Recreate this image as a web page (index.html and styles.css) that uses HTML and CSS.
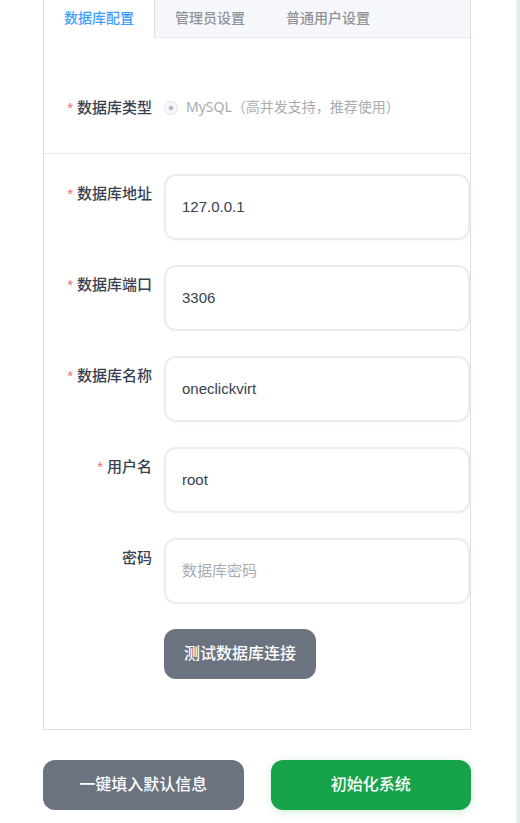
FILE: index.html
```html
<!DOCTYPE html>
<html lang="zh-CN">
<head>
<meta charset="utf-8">
<meta name="viewport" content="width=device-width, initial-scale=1">
<title>系统初始化</title>
<link rel="stylesheet" href="styles.css">
</head>
<body>
<main class="card">
  <form class="setup">
    <section class="panel">
      <div class="tabs" role="tablist">
        <button class="tab tab-active" type="button" role="tab" aria-selected="true">数据库配置</button>
        <button class="tab" type="button" role="tab" aria-selected="false">管理员设置</button>
        <button class="tab" type="button" role="tab" aria-selected="false">普通用户设置</button>
      </div>
      <div class="row type-row">
        <label class="label required" for="db-type">数据库类型</label>
        <div class="radio">
          <input id="db-type" class="radio-input" type="radio" name="db-type" checked disabled>
          <label class="radio-text" for="db-type">MySQL（高并发支持，推荐使用）</label>
        </div>
      </div>
      <div class="fields">
        <div class="row">
          <label class="label required" for="db-host">数据库地址</label>
          <input class="field" id="db-host" type="text" value="127.0.0.1">
        </div>
        <div class="row">
          <label class="label required" for="db-port">数据库端口</label>
          <input class="field" id="db-port" type="text" value="3306">
        </div>
        <div class="row">
          <label class="label required" for="db-name">数据库名称</label>
          <input class="field" id="db-name" type="text" value="oneclickvirt">
        </div>
        <div class="row">
          <label class="label required" for="db-user">用户名</label>
          <input class="field" id="db-user" type="text" value="root">
        </div>
        <div class="row">
          <label class="label" for="db-pass">密码</label>
          <input class="field" id="db-pass" type="password" placeholder="数据库密码">
        </div>
        <div class="row">
          <span class="label"></span>
          <button class="button" type="button">测试数据库连接</button>
        </div>
      </div>
    </section>
    <div class="actions">
      <button class="button" type="button">一键填入默认信息</button>
      <button class="button button-primary" type="submit">初始化系统</button>
    </div>
  </form>
</main>
</body>
</html>
```
FILE: styles.css
```css
* {
  box-sizing: border-box;
}

body {
  margin: 0;
  background: #def1e8;
  color: #374151;
  font-family: "Liberation Sans", "Noto Sans CJK SC", sans-serif;
}

.card {
  min-height: 100vh;
  margin-right: 3px;
  padding: 0 45px 13px 43px;
  border-right: 1px solid #e9f6f0;
  background: #fff;
}

.panel {
  padding-bottom: 50px;
  border: 1px solid #dcdfe6;
  border-top: 0;
}

.tabs {
  display: flex;
  height: 38px;
  border-bottom: 1px solid #e4e7ed;
  background: #f5f7fa;
}

.tab {
  height: 38px;
  padding: 0 20px 2px;
  border: 0;
  border-right: 1px solid transparent;
  background: none;
  color: #909399;
  font: 500 14px/36px "Liberation Sans", "Noto Sans CJK SC", sans-serif;
}

.tab-active {
  border-right-color: #dcdfe6;
  background: #fff;
  color: #409eff;
}

.row {
  display: flex;
  align-items: flex-start;
}

.type-row {
  padding: 50px 0 25px;
  border-bottom: 1px solid #e4e7ed;
}

.label {
  flex: 0 0 120px;
  padding-right: 12px;
  font-size: 15px;
  font-weight: 500;
  line-height: 40px;
  text-align: right;
}

.required::before {
  content: "*";
  margin-right: 4px;
  color: #f56c6c;
}

.radio {
  display: flex;
  align-items: center;
  gap: 8px;
  height: 40px;
}

.radio-input {
  appearance: none;
  width: 14px;
  height: 14px;
  margin: 0;
  border: 1px solid #e4e7ed;
  border-radius: 50%;
  background: radial-gradient(circle, #a8abb2 1px, #f5f7fa 3px);
}

.radio-text {
  padding-bottom: 2px;
  color: #a8abb2;
  font-family: "Noto Sans", "Noto Sans CJK SC", sans-serif;
  font-size: 14px;
  line-height: 20px;
}

.fields {
  display: grid;
  gap: 25px;
  padding-top: 20px;
}

.field {
  flex: 1;
  min-width: 0;
  height: 66px;
  padding: 0 16px 2px;
  border: 2px solid #ebecf0;
  border-radius: 12px;
  background: #fff;
  box-shadow: 0 2px 4px rgba(0, 0, 0, 0.02);
  color: #374151;
  font: 15px "Liberation Sans", "Noto Sans CJK SC", sans-serif;
}

.field::placeholder {
  color: #a8abb2;
}

.button {
  height: 50px;
  padding: 0 20px 4px;
  border: 0;
  border-radius: 12px;
  background: #6b7280;
  color: #fff;
  font: 500 16px "Liberation Sans", "Noto Sans CJK SC", sans-serif;
}

.button-primary {
  background: #16a34a;
  box-shadow: 0 2px 8px rgba(22, 163, 74, 0.2);
}

.actions {
  display: grid;
  grid-template-columns: 1fr 1fr;
  gap: 27px;
  padding-top: 30px;
}
```
